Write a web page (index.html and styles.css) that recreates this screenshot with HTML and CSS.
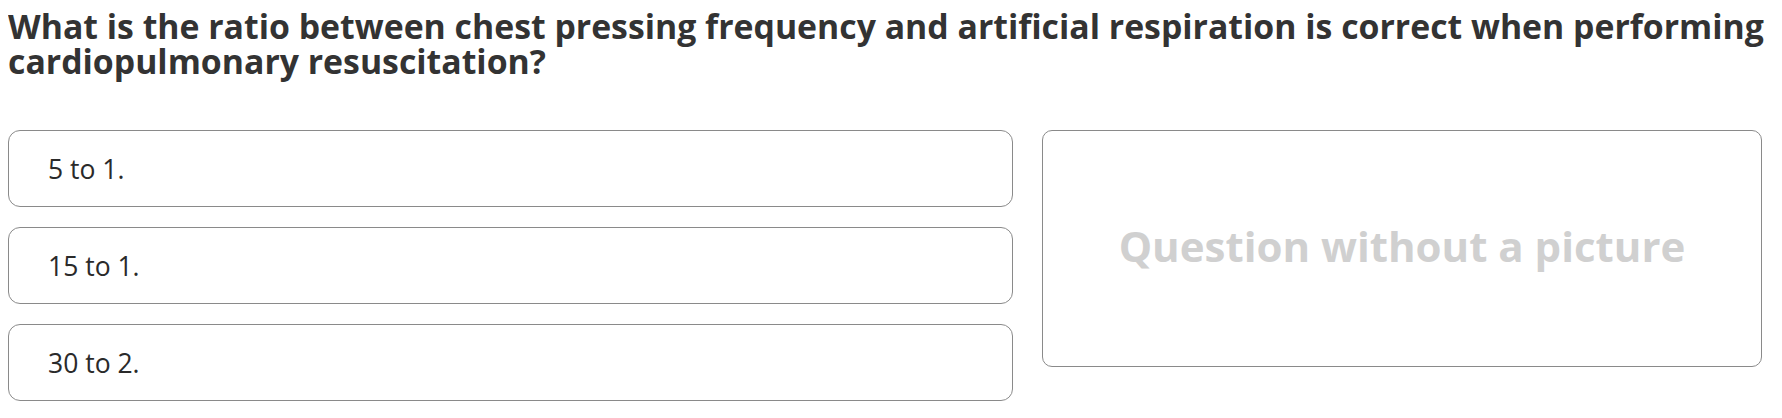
FILE: index.html
```html
<!DOCTYPE html>
<html lang="en">
<head>
<meta charset="utf-8">
<title>Question</title>
<link rel="stylesheet" href="styles.css">
</head>
<body>
<div class="quiz">
  <h1 class="question">What is the ratio between chest pressing frequency and artificial respiration is correct when performing cardiopulmonary resuscitation?</h1>
  <div class="content">
    <div class="answers">
      <div class="answer">5 to 1.</div>
      <div class="answer">15 to 1.</div>
      <div class="answer">30 to 2.</div>
    </div>
    <div class="picture">Question without a picture</div>
  </div>
</div>
</body>
</html>
```

FILE: styles.css
```css
html, body {
  background: #fff;
}
body {
  margin: 8px;
  font-family: "Open Sans", "Noto Sans", sans-serif;
  color: #333;
}
.quiz {
  width: 1766px;
}
.question {
  margin: 0;
  padding-top: 1px;
  font-size: 33.8px;
  font-weight: 700;
  line-height: 35px;
  color: #333;
}
.content {
  display: flex;
  gap: 29px;
  margin-top: 51px;
  align-items: flex-start;
}
.answers {
  width: 1005px;
  display: flex;
  flex-direction: column;
  gap: 20px;
}
.answer {
  box-sizing: border-box;
  height: 77px;
  border: 1px solid #8a8a8a;
  border-radius: 12px;
  display: flex;
  align-items: center;
  padding: 0 39px;
  font-size: 26.5px;
  color: #2a2a2a;
}
.picture {
  box-sizing: border-box;
  width: 720px;
  height: 237px;
  border: 1px solid #8a8a8a;
  border-radius: 10px;
  display: flex;
  align-items: center;
  justify-content: center;
  padding-bottom: 6px;
  font-size: 42px;
  font-weight: 700;
  color: #d0d0d0;
}
```
